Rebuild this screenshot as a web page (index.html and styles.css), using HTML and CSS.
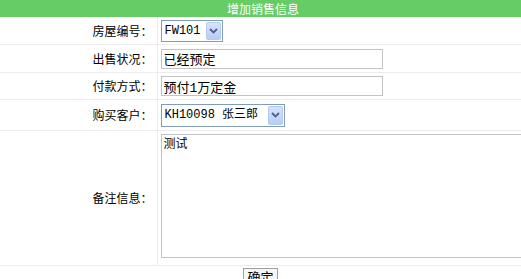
FILE: index.html
```html
<!DOCTYPE html>
<html lang="zh-CN">
<head>
<meta charset="utf-8">
<title>增加销售信息</title>
<link rel="stylesheet" href="styles.css">
</head>
<body>
<table class="form">
  <colgroup><col class="col-label"><col class="col-field"></colgroup>
  <tr class="row-title"><th colspan="2" class="title">增加销售信息</th></tr>
  <tr class="row-a">
    <td class="label">房屋编号：</td>
    <td class="field">
      <span class="select-wrap sel-house">
        <select class="select"><option>FW101</option></select>
        <span class="arrow"><svg width="9" height="6" viewBox="0 0 9 6"><path d="M1 1 L4.5 4.5 L8 1" fill="none" stroke="#4d6185" stroke-width="1.8"/></svg></span>
      </span>
    </td>
  </tr>
  <tr class="row-b">
    <td class="label">出售状况：</td>
    <td class="field"><input class="text" type="text" value="已经预定"></td>
  </tr>
  <tr class="row-c">
    <td class="label">付款方式：</td>
    <td class="field"><input class="text" type="text" value="预付1万定金"></td>
  </tr>
  <tr class="row-d">
    <td class="label">购买客户：</td>
    <td class="field">
      <span class="select-wrap sel-client">
        <select class="select"><option>KH10098 张三郎</option></select>
        <span class="arrow"><svg width="9" height="6" viewBox="0 0 9 6"><path d="M1 1 L4.5 4.5 L8 1" fill="none" stroke="#4d6185" stroke-width="1.8"/></svg></span>
      </span>
    </td>
  </tr>
  <tr class="row-e">
    <td class="label">备注信息：</td>
    <td class="field field-top"><textarea class="memo">测试</textarea></td>
  </tr>
  <tr class="row-f">
    <td colspan="2" class="actions"><button class="btn" type="button">确定</button></td>
  </tr>
</table>
</body>
</html>
```
FILE: styles.css
```css
html, body {
  margin: 0;
  padding: 0;
  background: #ffffff;
  overflow: hidden;
}
body {
  font-family: "Noto Sans CJK SC", "Liberation Sans", sans-serif;
  font-size: 12px;
  color: #000;
}
.form {
  width: 521px;
  table-layout: fixed;
  border-collapse: collapse;
}
.col-label { width: 157px; }
.title {
  height: 17px;
  padding: 0 0 0 5px;
  background: #66cc66;
  color: #ffffff;
  font-weight: normal;
  font-size: 12px;
  line-height: 17px;
  text-align: center;
}
.form td {
  padding: 0;
  border-bottom: 1px solid #ececec;
}
.label {
  text-align: right;
  padding-right: 4px !important;
  border-right: 1px solid #ececec;
  line-height: 14px;
}
.field {
  padding-left: 3px !important;
  overflow: visible;
}
.row-a td { height: 27px; }
.row-b td { height: 27px; }
.row-c td { height: 26px; }
.row-d td { height: 30px; }
.row-e td { height: 131px; }
.row-f td { height: 16px; border-bottom: none; }

.select-wrap {
  position: relative;
  display: inline-block;
  vertical-align: middle;
}
.select {
  -webkit-appearance: none;
  appearance: none;
  display: block;
  margin: 0;
  border: 1px solid #7f9db9;
  border-radius: 0;
  background: #fff;
  color: #000;
  font-family: "Liberation Mono", "Noto Sans CJK SC", monospace;
  font-size: 12px;
  padding: 0 0 0 3px;
  outline: none;
}
.sel-house .select { width: 62px; height: 22px; }
.sel-client .select { width: 124px; height: 23px; }
.arrow {
  position: absolute;
  right: 2px;
  top: 2px;
  bottom: 2px;
  width: 15px;
  border: 1px solid #b7c9ef;
  border-radius: 2px;
  background: linear-gradient(#d6e3fd, #b7cdf7);
  display: flex;
  align-items: center;
  justify-content: center;
  box-sizing: border-box;
}
.text {
  display: block;
  box-sizing: border-box;
  width: 222px;
  height: 20px;
  margin: 0;
  padding: 0 2px;
  border: 1px solid #c3c3c3;
  font-family: "Liberation Mono", "Noto Sans CJK SC", monospace;
  font-size: 13px;
  color: #000;
  outline: none;
}
.field-top { vertical-align: top; padding-top: 3px !important; }
.memo {
  display: block;
  box-sizing: border-box;
  width: 371px;
  height: 124px;
  margin: 0;
  padding: 1px 2px;
  border: 1px solid #c3c3c3;
  font-family: "Noto Sans CJK SC", sans-serif;
  font-size: 12px;
  line-height: 14px;
  color: #000;
  resize: none;
  overflow-y: scroll;
  outline: none;
}
.memo::-webkit-scrollbar { width: 17px; }
.memo::-webkit-scrollbar-track { background: #f4f4f2; }
.memo::-webkit-scrollbar-button:single-button:vertical:decrement,
.memo::-webkit-scrollbar-button:single-button:vertical:increment {
  display: block;
  height: 17px;
  border: 1px solid #c8c8c8;
  background: #f0f0ee;
}
.actions {
  text-align: center;
  vertical-align: top;
  padding-top: 2px !important;
}
.btn {
  margin: 0;
  padding: 0 3px;
  height: 18px;
  border: 1px solid #a0a0a0;
  border-radius: 0;
  background: #f6f6f6;
  font-family: "Noto Sans CJK SC", sans-serif;
  font-size: 13px;
  line-height: 16px;
  color: #000;
}
```
